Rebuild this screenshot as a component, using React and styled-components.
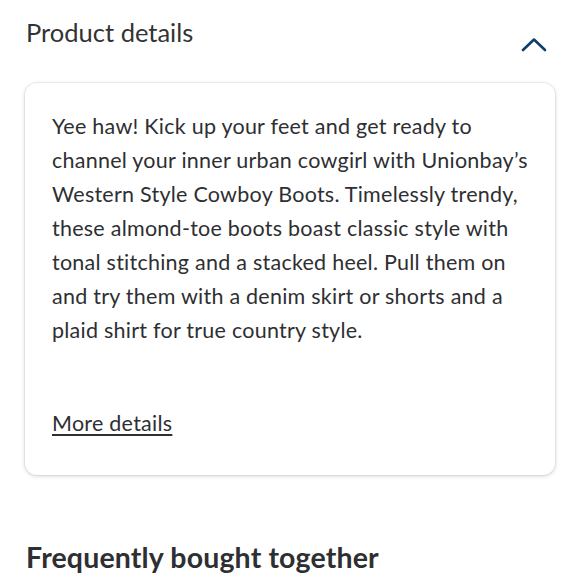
import React, { useState } from "react";
import styled, { createGlobalStyle } from "styled-components";

const GlobalStyle = createGlobalStyle`
  html, body {
    margin: 0;
    padding: 0;
    background: #fff;
    font-family: Lato, "Noto Sans", "Liberation Sans", sans-serif;
    color: #2e2f32;
  }
`;

const Page = styled.div`
  width: 580px;
  height: 580px;
  overflow: hidden;
  padding: 0 25px;
  box-sizing: border-box;
`;

const Header = styled.div`
  display: flex;
  justify-content: space-between;
  align-items: flex-start;
  padding-top: 15px;
  height: 83px;
  box-sizing: border-box;
`;

const Title = styled.h2`
  margin: 0;
  padding-left: 1px;
  font-size: 25.5px;
  line-height: 34px;
  font-weight: 400;
  color: #333;
`;

const Toggle = styled.button`
  background: none;
  border: none;
  padding: 0;
  margin: 19px 7px 0 0;
  width: 28px;
  height: 20px;
  display: flex;
  align-items: center;
  justify-content: center;
  cursor: pointer;
`;

const Card = styled.section`
  background: #fff;
  border-radius: 12px;
  box-shadow: 0 1px 4px rgba(0, 0, 0, 0.18), 0 0 0 1px rgba(0, 0, 0, 0.04);
  padding: 26px 25px 35px 27px;
`;

const Description = styled.p`
  margin: 0;
  font-size: 21.5px;
  line-height: 34px;
  letter-spacing: 0.25px;
  color: #2e2f32;
`;

const MoreLink = styled.a`
  display: inline-block;
  margin-top: 59px;
  font-size: 21.5px;
  line-height: 34px;
  letter-spacing: 0.25px;
  color: #2e2f32;
  text-decoration: underline;
  text-underline-offset: 3px;
  cursor: pointer;
`;

const SectionTitle = styled.h2`
  margin: 65px 0 0;
  padding-left: 1px;
  font-size: 28.5px;
  line-height: 34px;
  font-weight: 700;
  letter-spacing: 0.15px;
  color: #2e2f32;
`;

function Chevron({ open }) {
  return (
    <svg width="26" height="15" viewBox="0 0 26 15" fill="none">
      <path
        d={open ? "M2 13 L13 2.5 L24 13" : "M2 2.5 L13 13 L24 2.5"}
        stroke="#0e3f6b"
        strokeWidth="2.6"
        strokeLinecap="round"
        strokeLinejoin="round"
      />
    </svg>
  );
}

export default function App() {
  const [open, setOpen] = useState(true);

  return (
    <>
      <GlobalStyle />
      <Page>
        <Header>
          <Title>Product details</Title>
          <Toggle onClick={() => setOpen(o => !o)} aria-label="Toggle details">
            <Chevron open={open} />
          </Toggle>
        </Header>

        {open && (
          <Card>
            <Description>
              Yee haw! Kick up your feet and get ready to channel your inner
              urban cowgirl with Unionbay’s Western Style Cowboy Boots.
              Timelessly trendy, these almond-toe boots boast classic style
              with tonal stitching and a stacked heel. Pull them on and try
              them with a denim skirt or shorts and a plaid shirt for true
              country style.
            </Description>
            <MoreLink>More details</MoreLink>
          </Card>
        )}

        <SectionTitle>Frequently bought together</SectionTitle>
      </Page>
    </>
  );
}
